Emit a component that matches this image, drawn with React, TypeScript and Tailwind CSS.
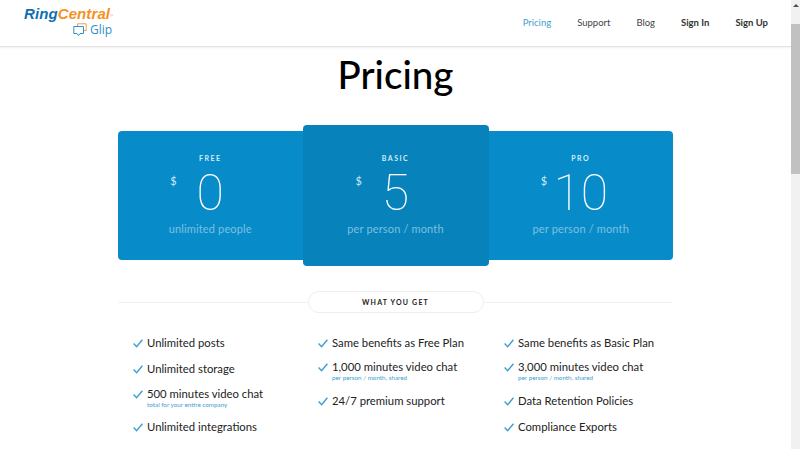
const plans = [
  { name: 'FREE', price: '0', note: 'unlimited people', featured: false },
  { name: 'BASIC', price: '5', note: 'per person / month', featured: true },
  { name: 'PRO', price: '10', note: 'per person / month', featured: false },
];

const columns = [
  [
    { label: 'Unlimited posts', h: 'h-[26px]' },
    { label: 'Unlimited storage', h: 'h-[25px]' },
    { label: '500 minutes video chat', sub: 'total for your entire company', h: 'h-[33px]' },
    { label: 'Unlimited integrations', h: 'h-[26px]' },
  ],
  [
    { label: 'Same benefits as Free Plan', h: 'h-[24px]' },
    { label: '1,000 minutes video chat', sub: 'per person / month, shared', h: 'h-[34px]' },
    { label: '24/7 premium support', h: 'h-[26px]' },
  ],
  [
    { label: 'Same benefits as Basic Plan', h: 'h-[24px]' },
    { label: '3,000 minutes video chat', sub: 'per person / month, shared', h: 'h-[34px]' },
    { label: 'Data Retention Policies', h: 'h-[26px]' },
    { label: 'Compliance Exports', h: 'h-[26px]' },
  ],
];

function Check() {
  return (
    <svg className="w-[10px] h-[9px] shrink-0 mt-[3px]" viewBox="0 0 10 9" fill="none" stroke="#3d9fd0" strokeWidth={1.4}>
      <path d="M0.6 4.6 L3.6 7.8 L9.4 0.8" />
    </svg>
  );
}

function Logo() {
  return (
    <div className="w-[112px] ml-[24px] pt-[6px] flex flex-col">
      <div className="text-[15px] leading-[16px] font-bold italic whitespace-nowrap font-['Liberation_Sans',sans-serif] tracking-[0.1px]">
        <span className="text-[#0f6fb3]">Ring</span>
        <span className="text-[#f5921f]">Central</span>
        <sup className="text-[4px] not-italic font-normal text-[#f5921f]">®</sup>
      </div>
      <div className="flex items-center gap-[3px] ml-[49px] mt-[1px]">
        <svg className="w-[14px] h-[14px]" viewBox="0 0 14 14" fill="none" strokeWidth={1}>
          <path d="M4.5 3 V0.8 H13.2 V7.5 H11" stroke="#f0a050" />
          <path d="M0.8 3.5 H10.5 V10.5 H7 L5.5 12.6 L4 10.5 H0.8 Z" stroke="#2f8fc8" />
        </svg>
        <span className="text-[12px] leading-[14px] text-[#2f8fc8] font-['Open_Sans',sans-serif]">Glip</span>
      </div>
    </div>
  );
}

function Nav() {
  return (
    <nav className="ml-auto mr-[23px] flex items-center h-full text-[9.5px] gap-[26px] text-[#444]">
      <a className="text-[#3d9fd0]">Pricing</a>
      <a>Support</a>
      <a>Blog</a>
      <a className="font-bold text-[#333]">Sign In</a>
      <a className="font-bold text-[#333]">Sign Up</a>
    </nav>
  );
}

function PlanCard({ name, price, note, featured }: (typeof plans)[number]) {
  return (
    <div
      className={`flex flex-col items-center text-white ${
        featured
          ? 'w-[186px] shrink-0 bg-[#0782bb] h-[141px] pt-[28px] rounded-[4px] relative z-10'
          : 'flex-1 bg-[#088cc9] h-[129px] pt-[22px] first:rounded-l-[4px] last:rounded-r-[4px]'
      }`}
    >
      <div className="text-[7px] leading-[10px] font-bold tracking-[1.5px] text-[#d5edf8]">{name}</div>
      <div className="grid w-[80px] h-[44px] mt-[8px]">
        <span className="col-start-1 row-start-1 justify-self-start text-[11px] leading-[13px] mt-[3px] text-[#cfe9f6]">$</span>
        <span className="col-start-1 row-start-1 justify-self-center text-[50px] leading-[44px] font-thin font-['Roboto',sans-serif]">{price}</span>
      </div>
      <div className="text-[11px] leading-[14px] mt-[7px] text-[#7cc0e2] tracking-[0.15px]">{note}</div>
    </div>
  );
}

function Feature({ label, sub, h }: { label: string; sub?: string; h: string }) {
  return (
    <div className={`flex gap-[4px] ${h}`}>
      <Check />
      <div className="flex flex-col">
        <span className="text-[11.3px] leading-[14px] text-[#222] whitespace-nowrap">{label}</span>
        {sub && <span className="text-[6.3px] leading-[7px] text-[#3d9fd0] whitespace-nowrap">{sub}</span>}
      </div>
    </div>
  );
}

export default function App() {
  return (
    <div className="w-[800px] h-[449px] flex overflow-hidden bg-white font-['Lato',sans-serif]">
      <div className="flex-1 min-w-0 flex flex-col">
        {/* Top bar */}
        <header className="h-[47px] shrink-0 flex border-b border-[#e3e3e3] shadow-[0_1px_2px_rgba(0,0,0,0.06)]">
          <Logo />
          <Nav />
        </header>

        <h1 className="text-[38.5px] leading-[44px] mt-[5px] text-center font-medium text-black">Pricing</h1>

        {/* Plan cards */}
        <div className="w-[555px] mx-auto mt-[29px] flex items-center h-[141px]">
          {plans.map((p) => (
            <PlanCard key={p.name} {...p} />
          ))}
        </div>

        {/* What you get */}
        <div className="w-[555px] mx-auto mt-[25px] h-[22px] flex items-center">
          <div className="flex-1 h-px bg-[#f1f1f1]" />
          <div className="w-[176px] h-[22px] rounded-full border border-[#eeeeee] flex items-center justify-center text-[7px] font-bold tracking-[1.2px] text-[#222]">
            WHAT YOU GET
          </div>
          <div className="flex-1 h-px bg-[#f1f1f1]" />
        </div>

        <div className="w-[555px] mx-auto mt-[23px] pl-[15px] grid grid-cols-[185px_186px_1fr]">
          {columns.map((col, i) => (
            <div key={i} className="flex flex-col">
              {col.map((item) => (
                <Feature key={item.label} {...item} />
              ))}
            </div>
          ))}
        </div>
      </div>

      {/* Scrollbar */}
      <div className="w-[9px] shrink-0 bg-[#f1f1f1] flex flex-col items-center">
        <div className="h-[24px] pt-[4px]">
          <div className="w-0 h-0 border-x-[3px] border-x-transparent border-b-[3px] border-b-[#505050]" />
        </div>
        <div className="w-full h-[150px] bg-[#c1c1c1]" />
      </div>
    </div>
  );
}
